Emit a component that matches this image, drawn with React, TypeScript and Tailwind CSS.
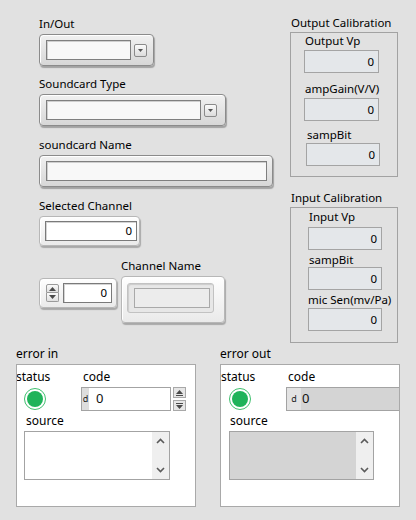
import type { ReactNode } from "react";

const frame =
  "rounded-[4px] border border-[#8b8b8b] bg-gradient-to-b from-[#f1f1f1] to-[#d7d7d7] shadow-[inset_1px_1px_0_#ffffff,1px_2px_1px_rgba(0,0,0,0.28)]";
const lightFrame =
  "rounded-[4px] border border-[#b7b7b7] bg-gradient-to-b from-[#fefefe] to-[#eaeaea] shadow-[inset_1px_1px_0_#ffffff,1px_2px_1px_rgba(0,0,0,0.25)]";
const textBox =
  "h-[20px] border border-[#7f7f7f] bg-[#f8f8f8] shadow-[inset_1px_1px_0_#cfcfcf]";
const numBox =
  "flex h-[20px] items-center justify-end border border-[#7a7a7a] bg-white pr-[4px] leading-none shadow-[inset_1px_1px_0_#d4d4d4]";
const calBox =
  "flex h-[23px] items-center justify-end border border-[#a4a4a4] bg-[#e4e7ea] pr-[4px] leading-none";

function Label({ children, className = "" }: { children: ReactNode; className?: string }) {
  return <div className={`h-4 whitespace-nowrap leading-4 ${className}`}>{children}</div>;
}

function Tri({ up = false }: { up?: boolean }) {
  return (
    <svg width="7" height="4" viewBox="0 0 7 4">
      <polygon points={up ? "0,4 7,4 3.5,0" : "0,0 7,0 3.5,4"} fill="#4a4a4a" />
    </svg>
  );
}

function DropButton() {
  return (
    <div className="ml-[3px] flex h-[13px] w-[13px] items-center justify-center rounded-[2px] border border-[#8a8a8a] bg-gradient-to-b from-[#fafafa] to-[#dcdcdc]">
      <svg width="5" height="3" viewBox="0 0 5 3">
        <polygon points="0,0 5,0 2.5,3" fill="#555" />
      </svg>
    </div>
  );
}

function Chevron({ up = false }: { up?: boolean }) {
  return (
    <svg width="9" height="6" viewBox="0 0 9 6">
      <polyline
        points={up ? "1,5 4.5,1.5 8,5" : "1,1 4.5,4.5 8,1"}
        fill="none"
        stroke="#5a5a5a"
        strokeWidth="1.6"
      />
    </svg>
  );
}

function Led({ left }: { left: string }) {
  return (
    <div
      className={`mt-[3px] flex h-[22px] w-[22px] items-center justify-center rounded-full border border-[#3fbf6e] bg-white ${left}`}
    >
      <div className="h-[16px] w-[16px] rounded-full bg-[#1fb35a]" />
    </div>
  );
}

function ErrorCluster({ out }: { out?: boolean }) {
  return (
    <div className="w-[180px]">
      <Label className="text-[12px]">{out ? "error out" : "error in"}</Label>
      <div className="mt-[2px] h-[143px] overflow-hidden border border-[#a9a9a9] bg-white">
        <div className="flex pt-[4px]">
          <div className={`shrink-0 ${out ? "w-[65px]" : "w-[64px]"}`}>
            <Label className={`text-[12px] ${out ? "" : "-ml-px"}`}>status</Label>
            <Led left={out ? "ml-[8px]" : "ml-[7px]"} />
          </div>
          <div className="shrink-0">
            <Label className="ml-[2px] text-[12px]">code</Label>
            <div className="mt-[2px] flex">
              <div
                className={`flex h-[24px] shrink-0 border border-[#a3a3a3] ${
                  out ? "w-[130px] bg-[#d4d4d4]" : "w-[90px] bg-white"
                }`}
              >
                <div
                  className={`flex items-center justify-center text-[9px] text-[#222] ${
                    out ? "w-[14px] bg-[#e3e3e3]" : "w-[7px] bg-[#dddddd]"
                  }`}
                >
                  d
                </div>
                <div className={`flex items-center text-[13px] text-[#111] ${out ? "pl-[1px]" : "pl-[7px]"}`}>
                  0
                </div>
              </div>
              {out ? null : (
                <div className="ml-[2px] flex flex-col gap-[2px]">
                  <div className="flex h-[11px] w-[13px] flex-col items-center justify-center gap-[1px] border border-[#a8a8a8] bg-[#e6e6e6]">
                    <Tri up />
                    <div className="h-px w-[7px] bg-[#4a4a4a]" />
                  </div>
                  <div className="flex h-[11px] w-[13px] flex-col items-center justify-center gap-[1px] border border-[#a8a8a8] bg-[#e6e6e6]">
                    <div className="h-px w-[7px] bg-[#4a4a4a]" />
                    <Tri />
                  </div>
                </div>
              )}
            </div>
          </div>
        </div>
        <Label className="ml-[9px] mt-[2px] text-[12px]">source</Label>
        <div
          className={`mt-[2px] flex h-[49px] border border-[#a3a3a3] ${
            out ? "ml-[8px] w-[145px] bg-[#d4d4d4]" : "ml-[7px] w-[146px] bg-white"
          }`}
        >
          <div className="flex-1" />
          <div className="flex w-[17px] flex-col items-center justify-between bg-[#efefef] py-[6px]">
            <Chevron up />
            <Chevron />
          </div>
        </div>
      </div>
    </div>
  );
}

export default function App() {
  return (
    <div className="h-[520px] w-[416px] overflow-hidden bg-[#e1e1e1] font-['Noto_Sans','Open_Sans',sans-serif] text-[11.5px] text-black">
      <div className="flex">
        {/* left column */}
        <div className="ml-[39px] w-[251px]">
          <Label className="mt-[16px]">In/Out</Label>
          <div className={`mt-[2px] flex h-[32px] w-[115px] items-center pl-[6px] ${frame}`}>
            <div className={`w-[85px] ${textBox}`} />
            <DropButton />
          </div>

          <Label className="mt-[10px]">Soundcard Type</Label>
          <div className={`mt-[2px] flex h-[32px] w-[187px] items-center pl-[6px] ${frame}`}>
            <div className={`w-[155px] ${textBox}`} />
            <DropButton />
          </div>

          <Label className="mt-[11px]">soundcard Name</Label>
          <div className={`mt-[2px] flex h-[32px] w-[234px] items-center pl-[6px] ${frame}`}>
            <div className={`w-[221px] ${textBox}`} />
          </div>

          <Label className="mt-[11px]">Selected Channel</Label>
          <div className={`mt-[2px] flex h-[30px] w-[101px] items-center pl-[5px] ${lightFrame}`}>
            <div className={`w-[92px] ${numBox}`}>0</div>
          </div>

          <div className="mt-[12px] flex items-start">
            <div className={`mt-[20px] flex h-[30px] w-[78px] items-center pl-[6px] ${lightFrame}`}>
              <div className="flex flex-col">
                <div className="flex h-[9px] w-[13px] items-center justify-center rounded-t-[2px] border border-[#9a9a9a] bg-gradient-to-b from-[#fafafa] to-[#e0e0e0]">
                  <Tri up />
                </div>
                <div className="flex h-[9px] w-[13px] items-center justify-center rounded-b-[2px] border border-t-0 border-[#9a9a9a] bg-gradient-to-b from-[#fafafa] to-[#e0e0e0]">
                  <Tri />
                </div>
              </div>
              <div className={`ml-[4px] w-[49px] ${numBox}`}>0</div>
            </div>
            <div className="ml-[4px]">
              <Label>Channel Name</Label>
              <div className={`mt-[2px] h-[47px] w-[104px] pl-[5px] pt-[6px] ${lightFrame}`}>
                <div className="h-[30px] w-[87px] rounded-[3px] border border-[#c2c2c2] bg-[#e7e7e7] pl-[6px] pt-[4px] shadow-[inset_1px_1px_1px_rgba(0,0,0,0.12)]">
                  <div className="h-[20px] w-[76px] border border-[#a9a9a9] bg-[#ececec]" />
                </div>
              </div>
            </div>
          </div>
        </div>

        {/* right column */}
        <div className="w-[108px]">
          <Label className="ml-[1px] mt-[15px]">Output Calibration</Label>
          <div className="mt-[1px] h-[145px] border border-[#a2a2a2]">
            <Label className="ml-[14px]">Output Vp</Label>
            <div className={`ml-[13px] mt-[1px] w-[75px] ${calBox}`}>0</div>
            <Label className="ml-[14px] mt-[8px]">ampGain(V/V)</Label>
            <div className={`ml-[13px] mt-[1px] w-[75px] ${calBox}`}>0</div>
            <Label className="ml-[16px] mt-[6px]">sampBit</Label>
            <div className={`ml-[15px] w-[74px] ${calBox}`}>0</div>
          </div>

          <Label className="ml-[1px] mt-[13px]">Input Calibration</Label>
          <div className="mt-[1px] h-[136px] border border-[#a2a2a2]">
            <Label className="ml-[18px] mt-[1px]">Input Vp</Label>
            <div className={`ml-[17px] mt-[2px] w-[74px] ${calBox}`}>0</div>
            <Label className="ml-[18px] mt-[2px]">sampBit</Label>
            <div className={`ml-[17px] -mt-px w-[74px] ${calBox}`}>0</div>
            <Label className="ml-[17px] mt-[2px]">mic Sen(mv/Pa)</Label>
            <div className={`ml-[17px] w-[74px] ${calBox}`}>0</div>
          </div>
        </div>
      </div>

      {/* error clusters */}
      <div className="mt-[3px] flex">
        <div className="ml-[16px]">
          <ErrorCluster />
        </div>
        <div className="ml-[24px]">
          <ErrorCluster out />
        </div>
      </div>
    </div>
  );
}
